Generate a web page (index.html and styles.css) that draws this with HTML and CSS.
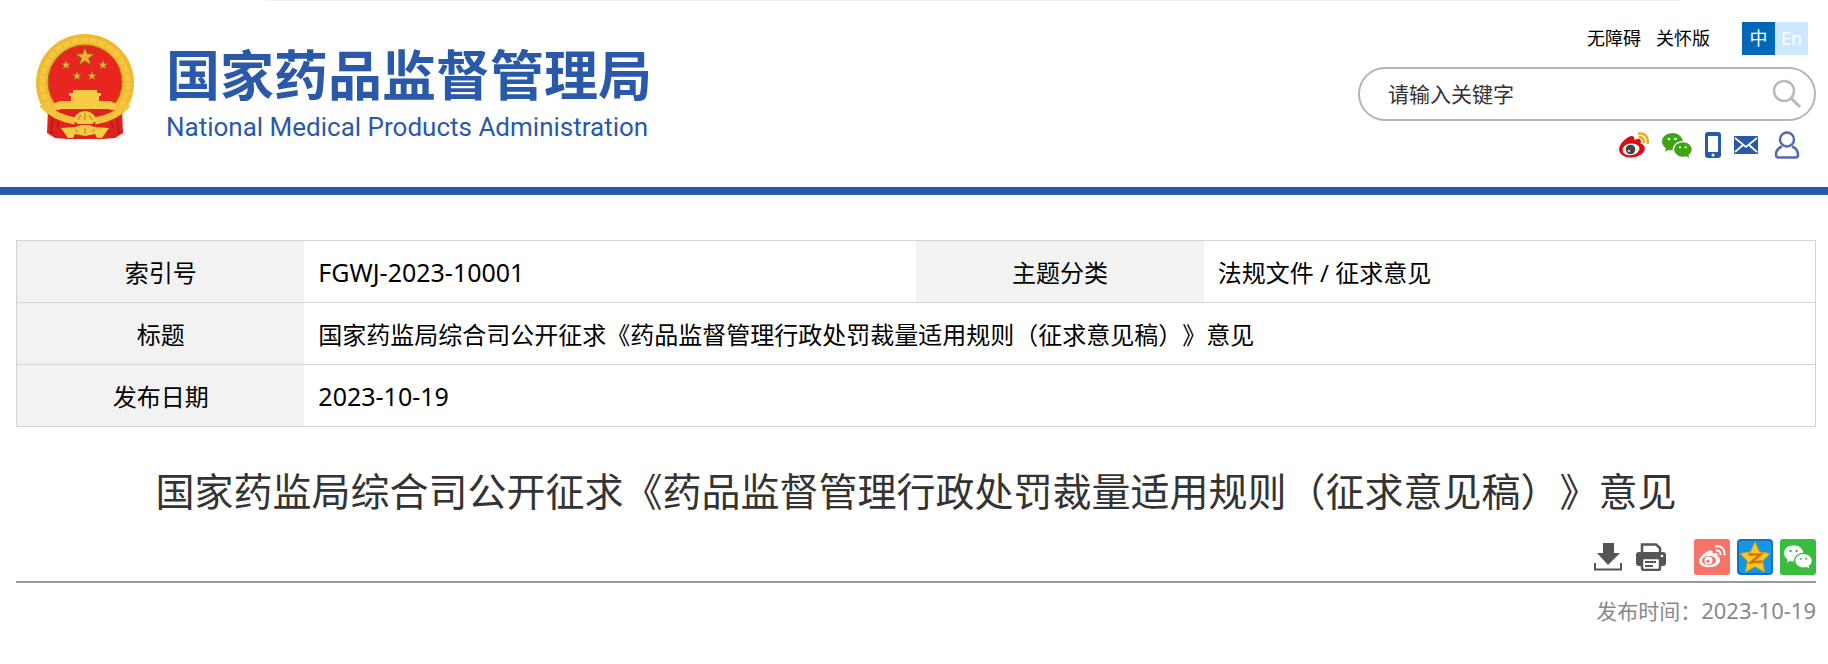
FILE: index.html
```
<!DOCTYPE html>
<html lang="zh-CN">
<head>
  <meta charset="UTF-8" />
  <meta name="viewport" content="width=device-width, initial-scale=1.0"/>
  <title>国家药监局综合司公开征求《药品监督管理行政处罚裁量适用规则（征求意见稿）》意见</title>
  <link rel="stylesheet" href="styles.css">
</head>
<body>

  <!-- shared shapes -->
  <svg class="defs" aria-hidden="true">
    <symbol id="star" viewBox="-10 -10 20 20">
      <path d="M0-10L2.4-3.2 9.5-3.1 3.8 1.2 5.9 8.1 0 4-5.9 8.1-3.8 1.2-9.5-3.1-2.4-3.2z"/>
    </symbol>
    <symbol id="wechat" viewBox="0 0 30 25">
      <path d="M10.500 0C4.600 0 0 3.800 0 8.600c0 2.800 1.500 5.100 3.900 6.700L3 18.700l3.700-2c1.300.4 2.500.6 3.900.6C10.700 12 15 8 20.800 8 20 3.200 15.700 0 10.500 0z"/>
      <path d="M21 9.300c-5 0-8.800 3.200-8.800 7.200s3.800 7.200 8.800 7.200c1.100 0 2.200-.2 3.200-.5l3 1.700-.8-2.900c2-1.300 3.300-3.300 3.300-5.500 0-4-3.900-7.200-8.700-7.200z"/>
      <g class="eyes"><circle cx="7" cy="6" r="1.300"/><circle cx="13.500" cy="6" r="1.300"/><circle cx="18" cy="14.300" r="1.100"/><circle cx="23.700" cy="14.300" r="1.100"/></g>
    </symbol>
  </svg>

  <div class="top-edge"></div>

  <header class="header">
    <a class="logo" href="#">
      <svg class="emblem" viewBox="0 0 100 106" aria-hidden="true">
        <circle cx="50" cy="49" r="49" fill="#f0b92f"/>
        <circle cx="50" cy="49" r="43" fill="none" stroke="#f5c843" stroke-width="5" stroke-dasharray="7 2"/>
        <circle cx="50" cy="48" r="37" fill="#e8261f" stroke="#a8701c" stroke-width="1"/>
        <g fill="#e8b23c" stroke="#9a5a14" stroke-width="1">
          <use href="#star" x="40" y="13" width="20" height="20"/>
          <use href="#star" x="26" y="26" width="10" height="10"/>
          <use href="#star" x="63" y="26" width="10" height="10"/>
          <use href="#star" x="37" y="37" width="10" height="10"/>
          <use href="#star" x="52" y="37" width="10" height="10"/>
        </g>
        <path fill="#f8cb45" d="M38 56H62V59H66V62H64V67H75L82 70 80 75H20L18 70 25 67H36V62H34V59H38z"/>
        <path fill="#dc231e" d="M13 76H87L88 99 80 104 68 105H32L20 104 12 99z"/>
        <path fill="none" stroke="#a5120f" stroke-width="1" d="M18 84L16 100M24 87L22 94M82 84L84 100M76 87L78 94"/>
        <path fill="none" stroke="#f4c33b" stroke-width="7" d="M7 70Q20 84 40 87M93 70Q80 84 60 87"/>
        <path fill="#f8cb45" d="M38 86L41 81 45 78 50 77 55 78 59 81 62 86 57 90H43zM26 94L40 93 46 91H54L60 93 74 94 67 104H62L60 100 50 102 40 100 38 104H33z"/>
        <path fill="none" stroke="#b9781c" stroke-width="1" d="M43 86L46 81M50 86V79M57 86L54 81M43 98L40 95M50 100V94M57 98L60 95"/>
      </svg>
      <span class="logo-text">
        <span class="logo-cn">国家药品监督管理局</span>
        <span class="logo-en">National Medical Products Administration</span>
      </span>
    </a>

    <div class="tools">
      <div class="top-links">
        <a href="#">无障碍</a>
        <a href="#">关怀版</a>
        <div class="lang">
          <a class="on" href="#">中</a>
          <a href="#">En</a>
        </div>
      </div>
      <form class="search">
        <input type="text" placeholder="请输入关键字" aria-label="请输入关键字">
        <button type="button" aria-label="搜索">
          <svg width="30" height="30" viewBox="0 0 30 30" fill="none" stroke="#b9b9b9"><circle cx="12" cy="12" r="10" stroke-width="2.500"/><path stroke-width="3" d="M19 19L28 28"/></svg>
        </button>
      </form>
      <div class="icons">
        <a href="#" aria-label="微博">
          <svg width="30" height="26" viewBox="0 0 30 26">
            <path fill="#dc0d12" d="M21.500 11.500c.9-2 .5-3.900-1.300-4.400-1.400-.4-3.200 0-5 .8.600-2.300-.2-4-2.400-4C8.900 3.900 0 11.200 0 17.200 0 22 5.600 25.500 12 25.500c8 0 13.800-4.500 13.800-9 0-2.700-1.700-4.200-4.300-5z"/>
            <ellipse cx="12" cy="17.300" rx="8.500" ry="5.800" fill="#fff" transform="rotate(-8 12 17.300)"/>
            <circle cx="11.500" cy="17.500" r="4.800" fill="#444"/>
            <circle cx="10" cy="19" r="1.300" fill="#ccc"/>
            <path d="M19.500 5.500Q25.500 4.500 25 11M19 1.700Q29.500 0 28.800 12" fill="none" stroke="#e9ae27" stroke-width="2.600"/>
          </svg>
        </a>
        <a class="wechat" href="#" aria-label="微信"><svg width="30" height="25"><use href="#wechat"/></svg></a>
        <a href="#" aria-label="手机版">
          <svg width="16" height="26" viewBox="0 0 16 26"><rect width="16" height="26" rx="3" fill="#2b59aa"/><path fill="#fff" d="M3 4H13V20H3z"/><circle cx="8" cy="23" r="1.500" fill="#fff"/></svg>
        </a>
        <a href="#" aria-label="邮箱">
          <svg width="24" height="18" viewBox="0 0 24 18"><rect width="24" height="18" rx="1" fill="#2b59aa"/><path d="M1 2L12 11 23 2M1 16L9 9M23 16L15 9" fill="none" stroke="#fff" stroke-width="1.700"/></svg>
        </a>
        <a class="user" href="#" aria-label="个人中心">
          <svg width="26" height="28" viewBox="0 0 26 28" fill="none" stroke="#5669ae" stroke-width="2.500"><circle cx="13" cy="8.500" r="7"/><path d="M8 15.500C4 17 2 20 2 24Q2 26.500 4.500 26.500H21.500Q24 26.500 24 24C24 20 22 17 18 15.500"/></svg>
        </a>
      </div>
    </div>
  </header>

  <main class="content">
    <table class="info">
      <tr>
        <th scope="row">索引号</th>
        <td class="num">FGWJ-2023-10001</td>
        <th scope="row">主题分类</th>
        <td>法规文件 / 征求意见</td>
      </tr>
      <tr>
        <th scope="row">标题</th>
        <td colspan="3">国家药监局综合司公开征求《药品监督管理行政处罚裁量适用规则（征求意见稿）》意见</td>
      </tr>
      <tr>
        <th scope="row">发布日期</th>
        <td class="num" colspan="3">2023-10-19</td>
      </tr>
    </table>

    <h1 class="title">国家药监局综合司公开征求《药品监督管理行政处罚裁量适用规则（征求意见稿）》意见</h1>

    <div class="actions">
      <button type="button" aria-label="下载">
        <svg width="28" height="28" viewBox="0 0 28 28"><path fill="#555" d="M9 0H20V10H26L14 22 3 10H9z"/><path fill="none" stroke="#555" stroke-width="2" d="M1 20V26.500H27V20"/></svg>
      </button>
      <button type="button" aria-label="打印">
        <svg width="30" height="28" viewBox="0 0 30 28"><path d="M6 10V1.500H20L24 5V10" fill="#fff" stroke="#555" stroke-width="2.500"/><rect y="9" width="30" height="14" rx="3" fill="#555"/><rect x="6" y="15" width="18" height="12" rx="2" fill="#fff" stroke="#555" stroke-width="2.500"/><path d="M9 19H20M9 23H17" stroke="#555" stroke-width="2"/><circle cx="26" cy="13" r="1.300" fill="#fff"/></svg>
      </button>
      <div class="share">
        <a href="#" aria-label="分享到微博">
          <svg width="36" height="36" viewBox="0 0 36 36"><rect width="36" height="36" rx="3" fill="#f57368"/><path fill="#fff" d="M23.500 17c.7-2.500-.8-4-5-2.400.7-2.300-.5-4-3.500-2.900C10.500 13.300 5 18.500 5 22c0 4 4.600 6.300 10 6.300 7 0 11-3.500 11-7 0-2.100-1.200-3.600-2.500-4.300z"/><ellipse cx="15" cy="21.500" rx="7" ry="4.700" fill="#f57368"/><circle cx="14.500" cy="21.500" r="4" fill="#fff"/><circle cx="14" cy="22.300" r="1.600" fill="#f57368"/><path d="M22 11.500Q26.500 11 26.500 16M21 7.500Q31 6 30.500 16.500" fill="none" stroke="#fff" stroke-width="2"/></svg>
        </a>
        <a href="#" aria-label="分享到QQ空间">
          <svg width="36" height="36" viewBox="0 0 36 36"><rect x="1" y="1" width="34" height="34" rx="3" fill="#1297e6" stroke="#1573bd" stroke-width="2"/><path d="M18 3L22.500 13 33 14.500 25.500 22 27.500 33 18 27.500 8.500 33 10.500 22 3 14.500 13.500 13z" fill="#fec629" stroke="#e99a10"/><path d="M11.500 15.500H23.500L14 23.500 25 22.500" fill="none" stroke="#cf7308" stroke-width="2.500"/></svg>
        </a>
        <a class="wechat-share" href="#" aria-label="分享到微信"><svg width="28" height="24" viewBox="0 0 30 25"><use href="#wechat"/></svg></a>
      </div>
    </div>

    <p class="date">发布时间：<span>2023-10-19</span></p>
  </main>

</body>
</html>
```
FILE: styles.css
```
* {
  box-sizing: border-box;
}

body {
  margin: 0;
  background-color: #fff;
  color: #000;
  font-family: "Noto Sans", "Noto Sans CJK SC", sans-serif;
  text-spacing-trim: space-all;
}

a {
  color: inherit;
  text-decoration: none;
}

button {
  padding: 0;
  border: none;
  background: none;
  cursor: pointer;
}

svg {
  display: block;
}

.defs {
  position: absolute;
  width: 0;
  height: 0;
}

.top-edge {
  height: 1px;
  margin: 0 148px 0 266px;
  background-color: #f0f0f0;
}

.header {
  display: flex;
  justify-content: space-between;
  align-items: flex-start;
  height: 194px;
  padding: 21px 12px 0 35px;
  border-bottom: 8px solid #2b59aa;
}

.logo {
  display: flex;
  gap: 31px;
  padding-top: 12px;
  color: #2b59aa;
}

.emblem {
  width: 100px;
  height: 106px;
}

.logo-text {
  display: flex;
  flex-direction: column;
}

.logo-cn {
  font-family: "Noto Sans CJK SC", sans-serif;
  font-size: 54px;
  font-weight: 700;
  line-height: 78px;
}

.logo-en {
  font-family: Roboto, sans-serif;
  font-size: 26px;
  line-height: 30px;
}

.tools {
  display: flex;
  flex-direction: column;
  align-items: flex-end;
  width: 458px;
}

.top-links {
  display: flex;
  align-items: center;
  gap: 15px;
  padding-right: 8px;
  font-size: 18px;
  line-height: 33px;
}

.lang {
  display: flex;
  margin-left: 17px;
  color: #fff;
}

.lang a {
  width: 33px;
  text-align: center;
  background-color: #cce8ff;
}

.lang .on {
  background-color: #0068b7;
}

.search {
  display: flex;
  align-items: center;
  width: 100%;
  height: 54px;
  margin-top: 12px;
  padding: 0 12px 0 28px;
  border: 2px solid #b5b5b5;
  border-radius: 27px;
}

.search input {
  flex: 1;
  min-width: 0;
  padding: 0;
  border: none;
  outline: none;
  background: none;
  font-family: inherit;
  font-size: 21px;
}

.search input::placeholder {
  color: #333;
}

.icons {
  display: flex;
  align-items: center;
  gap: 13px;
  padding: 10px 16px 0 0;
}

.icons .user {
  margin-left: 3px;
}

.wechat {
  fill: #3fa516;
}

.eyes {
  fill: var(--eye, #fff);
}

.content {
  padding: 45px 12px 0 16px;
}

.info {
  width: 100%;
  border: 1px solid #d3d3d3;
  border-collapse: collapse;
  table-layout: fixed;
  font-size: 24px;
  line-height: 36px;
}

.info tr {
  height: 62px;
  border-bottom: 1px solid #d3d3d3;
}

.info th {
  width: 16%;
  padding: 2px 0 0;
  background-color: #f2f2f2;
  font-weight: 400;
}

.info td {
  padding: 2px 14px 0;
}

.info .num {
  padding-top: 0;
  font-size: 25px;
}

.title {
  margin: 34px 0 0;
  color: #333;
  font-size: 39px;
  font-weight: 400;
  line-height: 60px;
  text-align: center;
}

.actions {
  display: flex;
  justify-content: flex-end;
  align-items: center;
  gap: 14px;
  margin-top: 18px;
  padding-bottom: 6px;
  border-bottom: 2px solid #999;
}

.share {
  display: flex;
  gap: 7px;
  margin-left: 14px;
}

.wechat-share {
  --eye: #39bd3f;
  display: flex;
  justify-content: center;
  align-items: center;
  width: 36px;
  height: 36px;
  border-radius: 3px;
  background-color: #39bd3f;
  fill: #fff;
}

.date {
  margin: 9px 0 0;
  color: #888;
  font-size: 21px;
  line-height: 36px;
  text-align: right;
}

.date span {
  font-size: 22px;
}
```
